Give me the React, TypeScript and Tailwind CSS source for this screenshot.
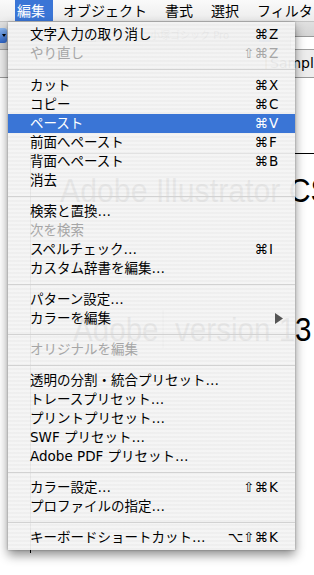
import React from 'react';

type Row =
  | { kind: 'sep'; h?: string }
  | { kind: 'item'; label: string; mod?: string; key?: string; disabled?: boolean; active?: boolean; sub?: boolean };

const rows: Row[] = [
  { kind: 'item', label: '文字入力の取り消し', mod: '⌘', key: 'Z' },
  { kind: 'item', label: 'やり直し', mod: '⇧⌘', key: 'Z', disabled: true },
  { kind: 'sep', h: 'h-[13px]' },
  { kind: 'item', label: 'カット', mod: '⌘', key: 'X' },
  { kind: 'item', label: 'コピー', mod: '⌘', key: 'C' },
  { kind: 'item', label: 'ペースト', mod: '⌘', key: 'V', active: true },
  { kind: 'item', label: '前面へペースト', mod: '⌘', key: 'F' },
  { kind: 'item', label: '背面へペースト', mod: '⌘', key: 'B' },
  { kind: 'item', label: '消去' },
  { kind: 'sep' },
  { kind: 'item', label: '検索と置換…' },
  { kind: 'item', label: '次を検索', disabled: true },
  { kind: 'item', label: 'スペルチェック…', mod: '⌘', key: 'I' },
  { kind: 'item', label: 'カスタム辞書を編集…' },
  { kind: 'sep' },
  { kind: 'item', label: 'パターン設定…' },
  { kind: 'item', label: 'カラーを編集', sub: true },
  { kind: 'sep' },
  { kind: 'item', label: 'オリジナルを編集', disabled: true },
  { kind: 'sep' },
  { kind: 'item', label: '透明の分割・統合プリセット…' },
  { kind: 'item', label: 'トレースプリセット…' },
  { kind: 'item', label: 'プリントプリセット…' },
  { kind: 'item', label: 'SWF プリセット…' },
  { kind: 'item', label: 'Adobe PDF プリセット…' },
  { kind: 'sep' },
  { kind: 'item', label: 'カラー設定…', mod: '⇧⌘', key: 'K' },
  { kind: 'item', label: 'プロファイルの指定…' },
  { kind: 'sep' },
  { kind: 'item', label: 'キーボードショートカット…', mod: '⌥⇧⌘', key: 'K' },
];

const menuTitles = ['オブジェクト', '書式', '選択', 'フィルタ'];

const App: React.FC = () => {
  return (
    <div className="relative w-[314px] h-[575px] overflow-hidden bg-white font-['DejaVu_Sans','Noto_Sans_CJK_JP',sans-serif] text-black">
      {/* Menu bar */}
      <div className="h-[22px] flex whitespace-nowrap text-[14px] leading-[22px] bg-[linear-gradient(#fafafa,#ececec)] border-b border-[#c4c4c4]">
        <div className="ml-[15px] pl-[2px] pr-[8px] bg-[#3a75d6] text-white">編集</div>
        {menuTitles.map((t) => (
          <div key={t} className="pl-[10px] pr-[8px]">
            {t}
          </div>
        ))}
      </div>

      {/* Control toolbar */}
      <div className="h-[28px] flex items-center bg-[linear-gradient(#e0e0e0,#c9c9c9)] border-b border-[#a0a0a0]">
        <div className="w-[7px] h-[15px] rounded-r-[3px] bg-[linear-gradient(#8db8f0,#2c63c6)] flex items-center justify-center">
          <div className="w-0 h-0 border-l-[2px] border-r-[2px] border-t-[3px] border-l-transparent border-r-transparent border-t-black" />
        </div>
        <div className="ml-[73px] w-[16px] h-[12px] border border-[#666] bg-white" />
        <span className="ml-[54px] text-[10px] text-[#222]">小塚ゴシック Pro</span>
        <div className="ml-[30px] w-[12px] h-[12px] bg-[#4b7ac8]" />
        <div className="ml-auto self-end w-[24px] h-[13px] bg-white border-t border-l border-[#999]" />
      </div>

      {/* Tab bar */}
      <div className="h-[28px] flex items-center bg-[#ededed] border-b border-[#9a9a9a]">
        <div className="ml-[265px] w-[10px] h-[11px] bg-[#e8b060] border border-[#b07a30]" />
        <span className="ml-[3px] text-[14px] whitespace-nowrap">Sample</span>
      </div>

      {/* Document */}
      <div className="ml-[30px] mt-[75px] h-[400px] border-l border-t border-black font-['Liberation_Sans',sans-serif] whitespace-nowrap">
        <div className="mt-[19px] pl-[29px]">
          <div className="w-max text-[34px] leading-[34px] scale-x-[0.89] origin-left">Adobe Illustrator CS</div>
        </div>
        <div className="mt-[103px] pl-[42px]">
          <div className="w-max flex items-center text-[34px] leading-[34px] scale-x-[0.87] origin-left">
            <span>Adobe</span>
            <span className="ml-[5px] mr-[13px] w-px h-[38px] bg-[#777]" />
            <span>version 13</span>
          </div>
        </div>
      </div>

      {/* Edit menu */}
      <div className="absolute left-[8px] top-[22px] w-[287px] pt-[3px] pb-[3px] bg-[repeating-linear-gradient(0deg,rgba(238,238,238,0.95)_0px,rgba(238,238,238,0.95)_2px,rgba(244,244,244,0.95)_2px,rgba(244,244,244,0.95)_4px)] shadow-[0_5px_10px_rgba(0,0,0,0.45),0_0_2px_rgba(0,0,0,0.3)] text-[13.5px] whitespace-nowrap">
        {rows.map((r, i) =>
          r.kind === 'sep' ? (
            <div key={i} className={`${r.h ?? 'h-[12px]'} flex items-center`}>
              <div className="w-full h-px bg-[#d2d2d2]" />
            </div>
          ) : (
            <div
              key={i}
              className={`h-[19px] flex items-center pl-[22px] pr-[14px] ${
                r.active ? 'bg-[#3a75d6] text-white' : r.disabled ? 'text-[#a6a6a6]' : 'text-black'
              }`}
            >
              <span className="flex-1">{r.label}</span>
              {r.key && (
                <span className="flex">
                  <span className="text-right">{r.mod}</span>
                  <span className="w-[13px] pl-[1px]">{r.key}</span>
                </span>
              )}
              {r.sub && (
                <svg width="8" height="11" viewBox="0 0 8 11" className="mr-[-2px]">
                  <polygon points="0,0 8,5.5 0,11" fill="#555" />
                </svg>
              )}
            </div>
          )
        )}
      </div>
    </div>
  );
};

export default App;
